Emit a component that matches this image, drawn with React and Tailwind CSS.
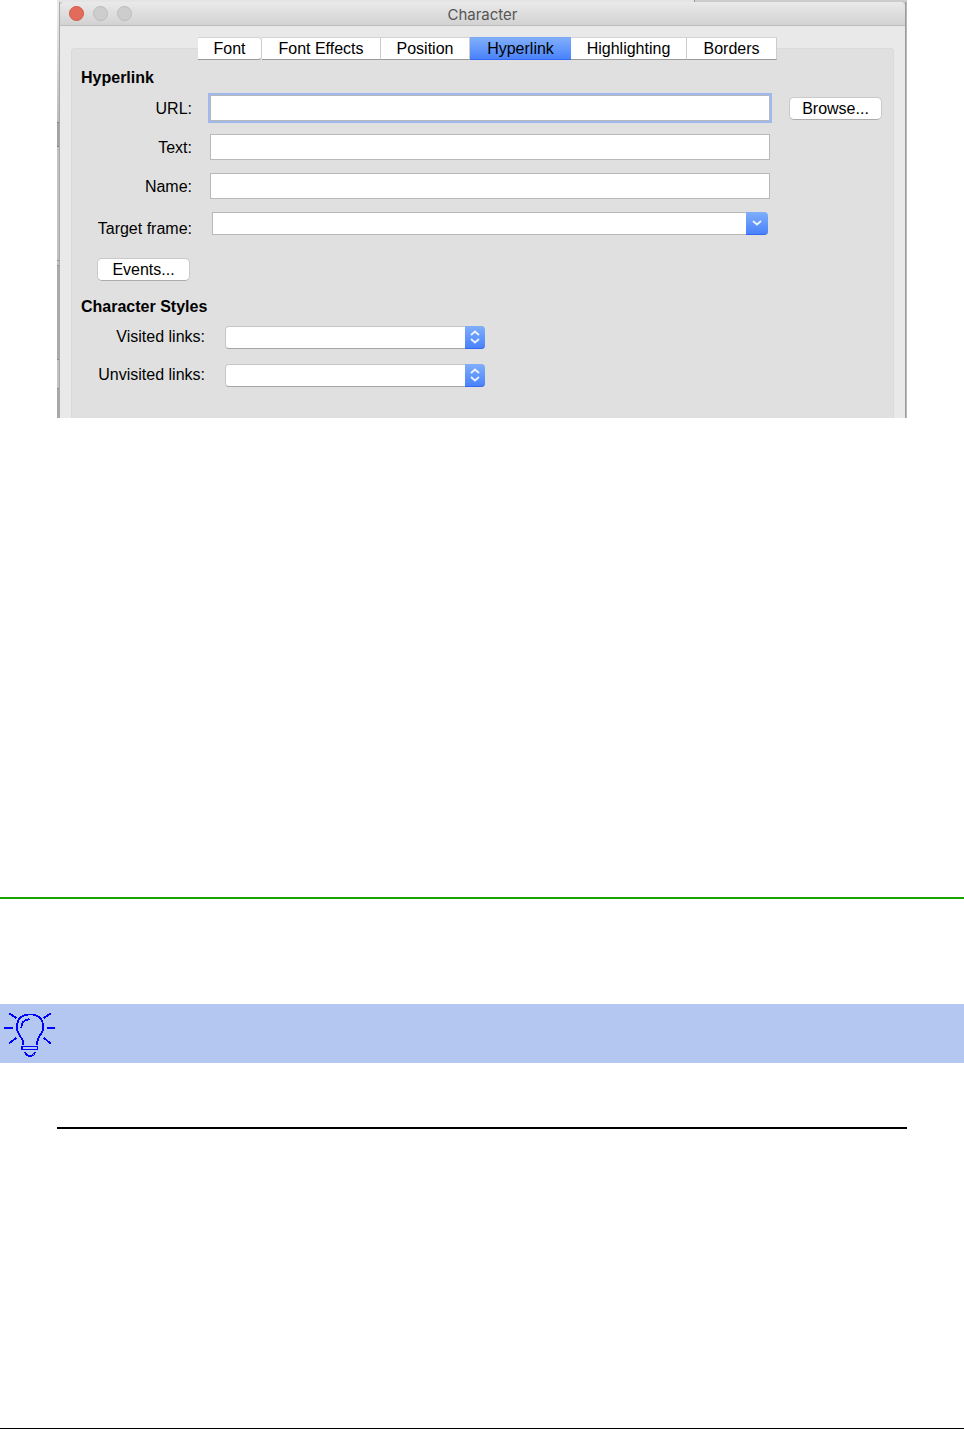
import { useState } from "react";

const tabs = [
  { name: "Font", width: "w-16 rounded-r" },
  { name: "Font Effects", width: "w-[119px]" },
  { name: "Position", width: "w-[89px]" },
  { name: "Hyperlink", width: "w-[101px]" },
  { name: "Highlighting", width: "w-[116px]" },
  { name: "Borders", width: "w-[90px]" }
];

const fieldStyle =
  "block h-[26px] w-full min-w-0 border border-[#b9b9b9] bg-white px-2 outline-none";

const buttonStyle =
  "h-[23px] w-[93px] shrink-0 rounded-[5px] border border-[#c9c9c9] border-b-[#acacac] bg-white leading-5";

const blueStyle =
  "flex items-center justify-center rounded-r-[4px] border-b border-[#3467f4] bg-linear-to-b from-[#80aefa] to-[#4a82fb]";

function FieldRow({ id, label, labelStyle = "pt-[2px]", children }) {
  return (
    <div className="flex h-[26px] items-center">
      <label
        htmlFor={id}
        className={`${labelStyle} mr-[18px] w-[111px] shrink-0 text-right`}
      >
        {label}
      </label>
      {children}
    </div>
  );
}

function StyleSelect({ id, label }) {
  return (
    <div className="flex h-6 items-center">
      <label htmlFor={id} className="w-[124px] shrink-0 text-right">
        {label}
      </label>
      <div className="relative ml-5 w-[260px]">
        <select
          id={id}
          className="block h-[23px] w-full appearance-none rounded-[4px] border border-[#c6c6c6] border-b-[#a5a5a5] bg-white px-2 outline-none"
        >
          <option></option>
        </select>
        <span className={`${blueStyle} pointer-events-none absolute inset-y-0 right-0 w-5`}>
          <svg width="10" height="14" viewBox="0 0 10 14" fill="none" stroke="#edf4ff" strokeWidth="1.8">
            <path d="M1 5 L5 1.5 L9 5 M1 9 L5 12.5 L9 9" />
          </svg>
        </span>
      </div>
    </div>
  );
}

function TitleBar() {
  return (
    <header className="grid h-[24px] grid-cols-[1fr_auto_1fr] items-center rounded-t-[5px] border-b border-[#bdbdbd] bg-linear-to-b from-[#eaeaea] to-[#d2d2d2] px-[9px]">
      <div className="flex gap-[9px]">
        <button aria-label="Close" className="size-[15px] rounded-full border border-[#d45747] bg-[#e26b59]" />
        <button aria-label="Minimize" className="size-[15px] rounded-full border border-[#bcbcbc] bg-[#cdcdcd]" />
        <button aria-label="Zoom" className="size-[15px] rounded-full border border-[#bcbcbc] bg-[#cdcdcd]" />
      </div>
      <h1 className="pt-[2px] font-[Inter,sans-serif] text-[15px] leading-5 text-[#555555]">
        Character
      </h1>
    </header>
  );
}

function CharacterDialog() {
  const [activeTab, setActiveTab] = useState("Hyperlink");

  return (
    <section className="mx-[57px] bg-[#cfcfcf]">
      {/* Edge of the window behind */}
      <div className="flex h-[2px]">
        <div className="flex-3 bg-[#e4e4e4]" />
        <div className="flex-1 border-l border-[#999999] bg-[#cccccc]" />
      </div>

      <div className="flex">
        <div className="flex w-[3px] flex-col border-r border-[#a8a8a8]">
          <div className="h-[120px] bg-linear-to-b from-[#eeeeee] to-[#bcbcbc]" />
          <div className="h-[25px] border-y border-[#858585] bg-[#a2a2a2]" />
          <div className="h-[113px] bg-[#c2c2c2]" />
          <div className="h-[6px] border-y border-[#8e8e8e] bg-[#c2c2c2]" />
          <div className="flex-1 bg-[#aaaaaa]" />
          <div className="h-[30px] border-y border-[#8e8e8e] bg-[#c2c2c2]" />
          <div className="h-[29px] bg-[#a8a8a8]" />
        </div>

        <div className="min-w-0 flex-1 rounded-t-[5px] bg-[#e9e9e9]">
          <TitleBar />

          <div className="px-[11px] pt-[22px]">
            <div className="rounded-t-[4px] border border-b-0 border-[#dadada] bg-[#e0e0e0] pr-[11px] pb-[31px] pl-[9px]">
              <nav className="-mt-[12px] flex justify-center pl-3">
                {tabs.map((tab) => (
                  <button
                    key={tab.name}
                    onClick={() => setActiveTab(tab.name)}
                    className={`${tab.width} h-[23px] border-y leading-5 ${
                      activeTab === tab.name
                        ? "border-t-[#7da9f7] border-b-[#3467f4] bg-linear-to-b from-[#80aefa] to-[#4a82fb]"
                        : "border-r border-t-[#d4d4d4] border-r-[#cccccc] border-b-[#999999] bg-white"
                    }`}
                  >
                    {tab.name}
                  </button>
                ))}
              </nav>

              <h2 className="mt-2 font-bold leading-5">
                Hyperlink
              </h2>

              <form onSubmit={(e) => e.preventDefault()}>
                <div className="mt-[7px] flex gap-[19px]">
                  <div className="flex min-w-0 flex-1 flex-col gap-[13px]">
                    <FieldRow id="url" label="URL:">
                      <input id="url" type="text" className={`${fieldStyle} ring-2 ring-[#9db9ee]`} />
                    </FieldRow>

                    <FieldRow id="text" label="Text:">
                      <input id="text" type="text" className={fieldStyle} />
                    </FieldRow>

                    <FieldRow id="name" label="Name:">
                      <input id="name" type="text" className={fieldStyle} />
                    </FieldRow>

                    <FieldRow id="frame" label="Target frame:" labelStyle="pt-2">
                      <div className="flex min-w-0 flex-1 self-start px-[2px]">
                        <input
                          id="frame"
                          type="text"
                          className="h-[23px] min-w-0 flex-1 border border-r-0 border-[#b9b9b9] bg-white px-2 outline-none"
                        />
                        <button type="button" aria-label="Show frames" className={`${blueStyle} h-[23px] w-[22px]`}>
                          <svg width="10" height="6" viewBox="0 0 10 6" fill="none" stroke="#edf4ff" strokeWidth="1.8">
                            <path d="M1 1 L5 4.5 L9 1" />
                          </svg>
                        </button>
                      </div>
                    </FieldRow>
                  </div>

                  <button type="button" className={`${buttonStyle} mt-[2px]`}>
                    Browse...
                  </button>
                </div>

                <button type="button" className={`${buttonStyle} mt-5 ml-4 block`}>
                  Events...
                </button>

                <h2 className="mt-4 mb-2 font-bold leading-5">
                  Character Styles
                </h2>

                <div className="flex flex-col gap-[14px]">
                  <StyleSelect id="visited" label="Visited links:" />
                  <StyleSelect id="unvisited" label="Unvisited links:" />
                </div>
              </form>
            </div>
          </div>
        </div>

        <div className="w-[2px] border-r border-[#b8b8b8] bg-[#9b9b9b]" />
      </div>
    </section>
  );
}

function LightBulb() {
  return (
    <svg width="60" height="59" viewBox="0 0 60 59" fill="none" stroke="#0000ff" strokeWidth="1.8" shapeRendering="crispEdges">
      <path d="M22.7 41 V36 L20 32 L17.3 26.7 V19.5 C18 14 23 10.4 30 10.4 C37 10.4 41.5 14 42.7 19 V26.7 L38.5 34 L37 38 V41" />
      <path d="M21.3 23.5 C21.3 19 24 16 29.5 15" />
      <path d="M22 42.5 H37.5 V45.5 H22 Z" />
      <path d="M24.5 48 L26.5 50.5 L30 52.7 L33.5 50.5 L35.5 48" />
      <path d="M9.3 9.3 L16.3 14 M4 24 H12.7 M9.3 39.3 L16.3 34 M50.7 9.3 L43.7 14 M47.3 24 H54.7 M50.7 39.3 L43.7 34" />
    </svg>
  );
}

export default function App() {
  return (
    <main className="bg-white font-['Liberation_Sans',Arial,sans-serif] text-base text-black">
      <CharacterDialog />

      <hr className="mt-[479px] border-t-2 border-[#18a303]" />

      {/* Tip heading band */}
      <div className="mt-[105px] bg-[#b4c7f0]">
        <LightBulb />
      </div>

      <hr className="mx-[57px] mt-16 border-t-2 border-black" />

      <hr className="mt-[299px] border-t border-black" />
    </main>
  );
}
